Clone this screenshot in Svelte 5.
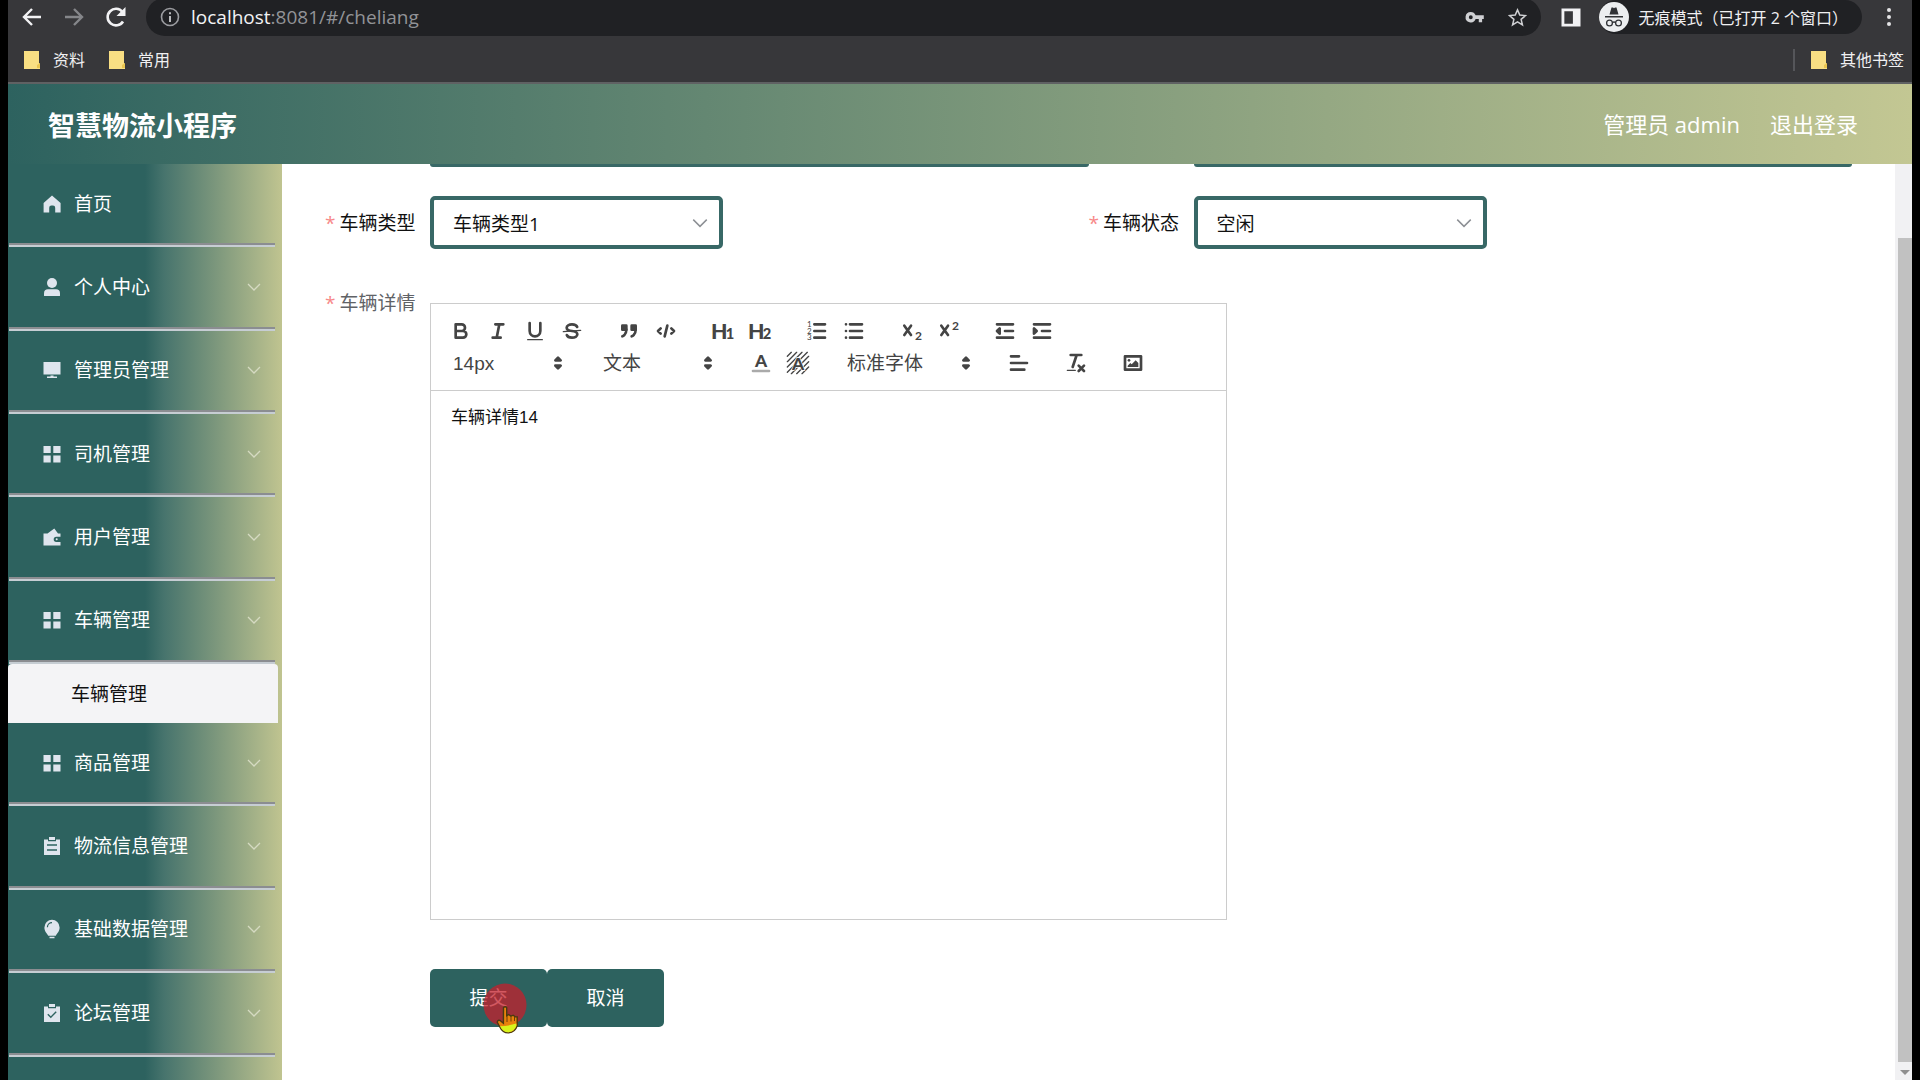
<script>
  const firstGroup = [
    { label: '首页', icon: 'home', leaf: true },
    { label: '个人中心', icon: 'user' },
    { label: '管理员管理', icon: 'screen' },
    { label: '司机管理', icon: 'grid' },
    { label: '用户管理', icon: 'wallet' },
    { label: '车辆管理', icon: 'grid' }
  ];
  const secondGroup = [
    { label: '商品管理', icon: 'grid' },
    { label: '物流信息管理', icon: 'order' },
    { label: '基础数据管理', icon: 'bulb' },
    { label: '论坛管理', icon: 'claim' },
    { label: '', icon: '' }
  ];
  const topGroups = [
    ['bold', 'italic', 'underline', 'strike'],
    ['quote', 'code'],
    ['h1', 'h2'],
    ['ordered', 'bullet'],
    ['sub', 'super'],
    ['outdent', 'indent']
  ];
  let type = $state('车辆类型1');
  let status = $state('空闲');
  let detail = $state('车辆详情14');
</script>

{#snippet folder()}
  <svg class="folder" viewBox="0 0 18 20" aria-hidden="true">
    <path d="M1 1h15v12l1 1v5H1z" fill="#f9df83" />
    <path d="M14 18v-3l3-2v5z" fill="#eac54f" />
  </svg>
{/snippet}

{#snippet chevron()}
  <svg class="chevron" viewBox="0 0 16 16" aria-hidden="true">
    <path d="M2 5l6 6 6-6" fill="none" stroke="currentColor" stroke-width="1.3" />
  </svg>
{/snippet}

{#snippet menuIcon(name)}
  <svg class="menu-icon" viewBox="0 0 20 20" aria-hidden="true" fill="currentColor">
    {#if name === 'home'}
      <path d="M10 1.6 18.6 9v9.4h-5.4v-4.6a2.2 2.2 0 0 0-2.2-2.2h-1.6a2.2 2.2 0 0 0-2.2 2.2v4.6H1.6V9z" />
    {:else if name === 'user'}
      <circle cx="10" cy="6" r="5" />
      <path d="M2 18.5v-2.2c0-2.500 1.500-4 4-4h8c2.500 0 4 1.500 4 4v2.200q0 .5-.5.5h-15q-.5 0-.5-.5z" />
    {:else if name === 'screen'}
      <path d="M1.500 2h17v12.500h-17zM8.500 15.500h3v1h3.500v1.500H5v-1.500h3.500z" />
    {:else if name === 'grid'}
      <path d="M1.500 2h7.200v7H1.500zM11.300 2h7.200v7h-7.200zM1.500 11.400h7.200v7H1.500zM11.300 11.400h7.200v7h-7.200z" />
    {:else if name === 'wallet'}
      <path d="M1.500 6.500h4L12.300 1.500l3.700 5h2.500v3.200h-4.200a2.600 2.600 0 0 0 0 5.200h4.200v3.500h-17z" />
      <circle cx="14.700" cy="12.300" r="1" />
    {:else if name === 'order'}
      <path fill-rule="evenodd" d="M2 3.500h4v1.800h8V3.500h4V19H2zM5 8.200v1.500h10V8.200zM5 13.200v1.500h10v-1.500zM7 1h6v3H7z" />
    {:else if name === 'bulb'}
      <path fill-rule="evenodd" d="M10 .8a7.600 7.600 0 0 1 7.600 7.600c0 4-2.500 5.600-3.800 8.300H6.200C4.900 14 2.400 12.400 2.400 8.400A7.600 7.600 0 0 1 10 .8zM4.800 8.200h1.200A4 4 0 0 1 10 4.300V3.100a5.200 5.200 0 0 0-5.200 5.100zM7.500 17.800h5v1.400h-5z" />
    {:else if name === 'claim'}
      <path d="M2 3.500h4v1.800h8V3.500h4V19H2zM7 1h6v3H7z" />
      <path d="M5.800 11.200l3 3 5.400-5.400" fill="none" stroke="#2f6361" stroke-width="1.400" />
    {/if}
  </svg>
{/snippet}

{#snippet menuItem(item)}
  <li>
    <a class="menu-link" href="#/{item.icon}" aria-label={item.label || '更多'}>
      {@render menuIcon(item.icon)}
      <span>{item.label}</span>
      {#if !item.leaf}{@render chevron()}{/if}
    </a>
  </li>
{/snippet}

{#snippet tool(name)}
  <button class="tool" type="button" aria-label={name}>
    <svg viewBox="0 0 18 18" aria-hidden="true">
      {#if name === 'bold'}
        <path class="s" d="M5 4h4.500a2.500 2.500 0 0 1 0 5H5zM5 9h5.500a2.500 2.500 0 0 1 0 5H5z" />
      {:else if name === 'italic'}
        <path class="s" d="M7 4h6M5 14h6M8 14l2-10" />
      {:else if name === 'underline'}
        <path class="s" d="M5 3v6a4 4 0 0 0 8 0V3" />
        <rect class="f" x="3" y="15" width="12" height="1" rx="0.500" />
      {:else if name === 'strike'}
        <path class="t" d="M2.500 9.500l13-1" />
        <path class="s" d="M12.900 6C12.500 4.800 10.900 4 9 4 6.800 4 5 5.100 5 6.500 5 8 6.200 8.700 9 9s4 1 4 2.500S11.200 14 9 14c-1.900 0-3.500-.8-3.900-2" />
      {:else if name === 'quote'}
        <path class="s f" d="M4 5h3v3H4zM11 5h3v3h-3z" />
        <path class="s f" d="M7 8c0 4-3 5-3 5M14 8c0 4-3 5-3 5" />
      {:else if name === 'code'}
        <path class="s" d="M5 7L3 9l2 2M13 7l2 2-2 2M10 5L8 13" />
      {:else if name === 'h1' || name === 'h2'}
        <text class="glyph heavy" x="0" y="15" font-size="16">H</text>
        <text class="glyph heavy" x="11" y="15" font-size="11">{name[1]}</text>
      {:else if name === 'ordered'}
        <path class="s" d="M7 4h8M7 9h8M7 14h8" />
        <text class="tiny" x="1.500" y="6">1</text>
        <text class="tiny" x="1.500" y="11">2</text>
        <text class="tiny" x="1.500" y="16">3</text>
      {:else if name === 'bullet'}
        <path class="s" d="M6 4h9M6 9h9M6 14h9M3 4h0M3 9h0M3 14h0" />
      {:else if name === 'sub'}
        <path class="s" d="M4 5l5 7M9 5l-5 7" />
        <text class="small" x="12" y="16">2</text>
      {:else if name === 'super'}
        <path class="s" d="M4 5l5 7M9 5l-5 7" />
        <text class="small" x="12" y="8">2</text>
      {:else if name === 'outdent'}
        <path class="s" d="M3 4h12M3 14h12M9 9h6" />
        <path class="s f" d="M5 7v4L3 9z" />
      {:else if name === 'indent'}
        <path class="s" d="M3 4h12M3 14h12M9 9h6" />
        <path class="s f" d="M3 7v4l2-2z" />
      {:else if name === 'color'}
        <text class="glyph heavy" x="9" y="12" font-size="13" text-anchor="middle">A</text>
        <path class="s pale" d="M3 15h12" />
      {:else if name === 'background'}
        <path class="t" d="M1 4l3-3M1 8l7-7M1 12l11-11M1 16l15-15M4 17l13-13M8 17l9-9M12 17l5-5" />
        <text class="glyph heavy halo" x="9" y="14" font-size="13" text-anchor="middle">A</text>
      {:else if name === 'align'}
        <path class="s" d="M3 4h6M3 9h12M3 14h10" />
      {:else if name === 'clean'}
        <path class="s" d="M5 3h8M6.500 12l3-9M11 11l4 4M15 11l-4 4" />
        <rect class="f" x="2" y="14" width="7" height="1" rx="0.500" />
      {:else if name === 'image'}
        <rect class="s" x="3" y="4" width="12" height="10" />
        <circle class="f" cx="6" cy="7" r="1" />
        <path class="f" d="M5 12v-1l2-2 1 1 3-3 2 2v3z" />
      {/if}
    </svg>
  </button>
{/snippet}

{#snippet picker(label, value, wide)}
  <span class="picker" class:wide>
    <select aria-label={label}>
      <option>{value}</option>
    </select>
    <svg viewBox="0 0 18 18" aria-hidden="true">
      <path class="s f" d="M7 11l2 2 2-2zM7 7l2-2 2 2z" />
    </svg>
  </span>
{/snippet}

<div class="window">
  <div class="browser">
    <div class="toolbar">
      <button class="nav" type="button" aria-label="后退">
        <svg viewBox="0 0 24 24" aria-hidden="true"><path d="M21 12H4M12 4l-8 8 8 8" fill="none" stroke="#f2f2f4" stroke-width="2.400" /></svg>
      </button>
      <button class="nav" type="button" aria-label="前进">
        <svg viewBox="0 0 24 24" aria-hidden="true"><path d="M3 12h17M12 4l8 8-8 8" fill="none" stroke="#85868a" stroke-width="2.400" /></svg>
      </button>
      <button class="nav" type="button" aria-label="刷新">
        <svg viewBox="0 0 24 24" aria-hidden="true">
          <path d="M19 16.500A8.300 8.300 0 1 1 18.500 7" fill="none" stroke="#f2f2f4" stroke-width="2.600" />
          <path d="M21.500 2v9h-9z" fill="#f2f2f4" />
        </svg>
      </button>
      <div class="address">
        <svg class="info" viewBox="0 0 20 20" aria-hidden="true">
          <circle cx="10" cy="10" r="8.500" fill="none" stroke="#9b9ca0" stroke-width="1.600" />
          <path d="M10 9v6M10 5.200v2" stroke="#b9babd" stroke-width="2" />
        </svg>
        <span class="url"><b>localhost</b>:8081/#/cheliang</span>
        <svg class="key" viewBox="0 0 20 14" aria-hidden="true">
          <path fill-rule="evenodd" fill="#cfd0d3" d="M6 1a5.600 5.600 0 0 1 5.200 3.600H20v4h-1.800V12h-3.600V8.600h-3.400A5.600 5.600 0 1 1 6 1zm0 3.600a2.100 2.100 0 1 0 0 4.200 2.100 2.100 0 0 0 0-4.200z" />
        </svg>
        <svg class="star" viewBox="0 0 20 20" aria-hidden="true">
          <path fill="none" stroke="#cfd0d3" stroke-width="1.600" d="M10 2l2.400 5.500 6 .5-4.600 3.900 1.400 5.900L10 14.700l-5.200 3.100 1.400-5.900L1.600 8l6-.5z" />
        </svg>
      </div>
      <svg class="panel" viewBox="0 0 20 20" aria-hidden="true">
        <path fill="#f2f2f4" fill-rule="evenodd" d="M0 0.500h20v19H0zM3 3.500v13h9v-13z" />
      </svg>
      <div class="incognito">
        <svg viewBox="0 0 30 30" aria-hidden="true">
          <circle cx="15" cy="15" r="15" fill="#eceef0" />
          <path d="M10.500 12.500l2-7h1.500l1 .8 1-.8h1.500l2 7zM6 14h18v1.600H6z" fill="#303236" />
          <circle cx="10.500" cy="21" r="2.900" fill="none" stroke="#303236" stroke-width="1.300" />
          <circle cx="19.500" cy="21" r="2.900" fill="none" stroke="#303236" stroke-width="1.300" />
          <path d="M13.400 20.500q1.600-1 3.200 0" fill="none" stroke="#303236" stroke-width="1.300" />
        </svg>
        <span>无痕模式（已打开 2 个窗口）</span>
      </div>
      <button class="more" type="button" aria-label="菜单">
        <svg viewBox="0 0 6 20" aria-hidden="true" fill="#e4e4e6"><circle cx="3" cy="3" r="2" /><circle cx="3" cy="10" r="2" /><circle cx="3" cy="17" r="2" /></svg>
      </button>
    </div>
    <nav class="bookmarks" aria-label="书签">
      <a href="#/ziliao">{@render folder()}资料</a>
      <a href="#/changyong">{@render folder()}常用</a>
      <a class="other" href="#/other">{@render folder()}其他书签</a>
    </nav>
  </div>

  <header class="app-header">
    <h1>智慧物流小程序</h1>
    <span>管理员 admin</span>
    <a href="#/logout">退出登录</a>
  </header>

  <div class="body">
    <aside>
      <ul class="menu first">
        {#each firstGroup as item}{@render menuItem(item)}{/each}
      </ul>
      <a class="submenu" href="#/cheliang">车辆管理</a>
      <ul class="menu second">
        {#each secondGroup as item}{@render menuItem(item)}{/each}
      </ul>
    </aside>

    <main>
      <form onsubmit={(e) => e.preventDefault()}>
        <div class="clipped" aria-hidden="true"><i></i><i></i></div>
        <div class="row">
          <div class="field">
            <label for="type"><em>*</em>车辆类型</label>
            <div class="select">
              <select id="type" bind:value={type}><option>车辆类型1</option></select>
              {@render chevron()}
            </div>
          </div>
          <div class="field">
            <label for="status"><em>*</em>车辆状态</label>
            <div class="select">
              <select id="status" bind:value={status}><option>空闲</option></select>
              {@render chevron()}
            </div>
          </div>
        </div>
        <div class="field detail">
          <label for="detail"><em>*</em>车辆详情</label>
          <div class="editor">
            <div class="tools">
              <div class="tool-row">
                {#each topGroups as group}
                  <span class="group">{#each group as name}{@render tool(name)}{/each}</span>
                {/each}
              </div>
              <div class="tool-row">
                {@render picker('字号', '14px', false)}
                {@render picker('标题', '文本', false)}
                <span class="group">{@render tool('color')}{@render tool('background')}</span>
                {@render picker('字体', '标准字体', true)}
                <span class="group">{@render tool('align')}</span>
                <span class="group">{@render tool('clean')}</span>
                <span class="group">{@render tool('image')}</span>
              </div>
            </div>
            <textarea id="detail" bind:value={detail}></textarea>
          </div>
        </div>
        <div class="actions">
          <button type="submit">
            提交
            <svg class="pointer" viewBox="0 0 48 52" aria-hidden="true">
              <circle cx="22" cy="22" r="21.500" fill="#c4202c" fill-opacity="0.750" />
              <path d="M20.500 24.500q1.800-1.500 3.200.2v8l2-1.200 2.200 1.600 2.300-.9 2 1.500 2 .2v9q-2.200 6.500-8.500 7-6 .2-9-6.200l-2.500-4.500q.8-3 3.200-1.500l3 2.500z" fill="#e8820c" stroke="#4a3a10" stroke-width="1.400" />
              <path d="M17 43.200q8.500-.2 16.400-2.600v2.200q-2 5.800-7.800 6.400-5.600.2-8.600-6z" fill="#d8f51c" />
              <path d="M24 33v6M28 33.500v5M31.500 34v4" stroke="#6b3c08" stroke-width="1" />
            </svg>
          </button>
          <button type="button">取消</button>
        </div>
      </form>
    </main>
    <div class="scrollbar" aria-hidden="true">
      <i class="thumb"></i>
      <i class="down"></i>
    </div>
  </div>
</div>

<style>
  :global(body) {
    margin: 0;
    background: #000;
  }
  * {
    box-sizing: border-box;
  }
  .window {
    display: flex;
    flex-direction: column;
    height: 100vh;
    margin: 0 8px;
    overflow: hidden;
    background: #fff;
    color: #111;
    font-family: 'Open Sans', 'Noto Sans CJK SC', sans-serif;
    font-size: 19px;
  }
  button,
  select,
  textarea {
    font: inherit;
    color: inherit;
    border: 0;
    background: none;
    padding: 0;
    margin: 0;
  }
  a {
    color: inherit;
    text-decoration: none;
  }
  svg {
    display: block;
    flex: none;
  }

  /* browser chrome */
  .browser {
    flex: none;
    height: 84px;
    background: #37373a;
    border-bottom: 2px solid #5f6163;
    color: #f0f0f2;
    font-size: 16px;
  }
  .toolbar {
    display: flex;
    align-items: center;
    height: 36px;
    padding: 0 20px 2px 12px;
  }
  .nav {
    width: 24px;
    height: 24px;
    margin-right: 18px;
  }
  .nav svg {
    width: 24px;
    height: 24px;
  }
  .address {
    display: flex;
    align-items: center;
    flex: 1;
    height: 38px;
    padding: 0 14px;
    margin-right: 20px;
    border-radius: 19px;
    background: #202124;
  }
  .info {
    width: 20px;
    height: 20px;
  }
  .url {
    flex: 1;
    margin-left: 11px;
    color: #929397;
    font-size: 19px;
    line-height: 34px;
  }
  .url b {
    font-weight: 400;
    color: #f2f2f4;
  }
  .key {
    width: 19px;
    height: 13px;
    margin-right: 24px;
  }
  .star {
    width: 19px;
    height: 19px;
  }
  .panel {
    width: 20px;
    height: 19px;
    margin-right: 18px;
  }
  .incognito {
    display: flex;
    align-items: center;
    gap: 10px;
    height: 34px;
    padding-right: 14px;
    margin-right: 24px;
    border-radius: 17px;
    background: #202124;
    white-space: nowrap;
  }
  .incognito svg {
    width: 30px;
    height: 30px;
  }
  .more svg {
    width: 6px;
    height: 20px;
  }
  .bookmarks {
    display: flex;
    align-items: center;
    gap: 23px;
    height: 48px;
    padding: 0 8px 0 15px;
  }
  .bookmarks a {
    display: flex;
    align-items: center;
    gap: 12px;
    line-height: 22px;
  }
  .bookmarks .other {
    margin-left: auto;
    padding-left: 15px;
    border-left: 2px solid #55565a;
  }
  .folder {
    width: 18px;
    height: 20px;
  }

  /* application header */
  .app-header {
    display: flex;
    align-items: center;
    flex: none;
    height: 80px;
    padding: 0 54px 0 40px;
    background: linear-gradient(90deg, #2d625f, #c3c793);
    color: #fff;
    font-size: 22px;
  }
  h1 {
    flex: 1;
    margin: 0;
    font-size: 27px;
    font-weight: 700;
  }
  .app-header a {
    margin-left: 30px;
  }
  .app-header span,
  .app-header a {
    padding-bottom: 2px;
  }

  .body {
    display: flex;
    flex: 1;
    min-height: 0;
  }

  /* sidebar */
  aside {
    flex: none;
    width: 274px;
    overflow: hidden;
    background: linear-gradient(90deg, #2d625f 50%, #47746d 57%, #c0c490);
    color: #fff;
  }
  .menu {
    display: grid;
    grid-auto-rows: 1fr;
    margin: 0;
    padding: 0;
    list-style: none;
  }
  .first {
    height: 500px;
  }
  .second {
    height: 417px;
  }
  .menu li {
    display: flex;
    margin: 0 7px 0 1px;
    border-bottom: 2px solid #c6cdd3;
  }
  .menu-link {
    display: flex;
    align-items: center;
    flex: 1;
    padding: 0 13px 0 33px;
    border-bottom: 2px solid #8b8d91;
  }
  .menu-icon {
    width: 20px;
    height: 20px;
    margin-right: 12px;
    color: #dfe5ee;
  }
  .menu-link span {
    flex: 1;
    padding-bottom: 2px;
  }
  .chevron {
    width: 16px;
    height: 16px;
  }
  .menu .chevron {
    color: #d5dac2;
  }
  .submenu {
    display: block;
    margin-right: 4px;
    padding: 2px 0 0 63px;
    border-radius: 4px 4px 0 0;
    background: #f4f4f6;
    color: #111;
    line-height: 57px;
  }

  /* form */
  main {
    flex: 1;
    min-width: 0;
    padding: 0 43px;
    overflow: hidden;
  }
  .clipped,
  .row {
    display: grid;
    grid-template-columns: 1fr 1fr;
  }
  .clipped i {
    height: 3px;
    margin-left: 105px;
    border-radius: 0 0 5px 5px;
    background: #386866;
  }
  .row {
    padding-top: 29px;
  }
  .field {
    display: flex;
  }
  .field label {
    flex: none;
    width: 105px;
    padding-right: 18px;
    line-height: 54px;
    text-align: right;
    white-space: nowrap;
  }
  .field em {
    margin-right: 4px;
    color: #f78989;
    font-style: normal;
  }
  .row .field {
    height: 53px;
  }
  .select,
  .picker {
    display: grid;
    align-items: center;
  }
  .select > :global(*),
  .picker > * {
    grid-area: 1 / 1;
  }
  .select {
    width: 293px;
    height: 53px;
  }
  .select select {
    width: 100%;
    height: 100%;
    padding: 2px 40px 0 19px;
    border: 4px solid #386866;
    border-radius: 5px;
    background: #fff;
    appearance: none;
  }
  .select .chevron {
    justify-self: end;
    width: 18px;
    height: 18px;
    margin-right: 14px;
    color: #8d9095;
    pointer-events: none;
  }
  .detail {
    margin-top: 54px;
  }
  .detail label {
    height: 0;
    line-height: 0;
    color: #606266;
  }
  .editor {
    display: flex;
    flex-direction: column;
    width: 797px;
    height: 617px;
    border: 1px solid #ccc;
  }
  .tools {
    padding: 11px;
    border-bottom: 1px solid #ccc;
    color: #444;
  }
  .tool-row {
    display: flex;
    gap: 20px;
    height: 32px;
  }
  .group {
    display: flex;
  }
  .tool {
    display: grid;
    place-items: center;
    width: 37px;
    height: 32px;
  }
  .tool svg,
  .picker svg {
    width: 24px;
    height: 24px;
  }
  .picker {
    width: 130px;
    height: 32px;
  }
  .picker.wide {
    width: 144px;
  }
  .picker select {
    width: 100%;
    padding-left: 11px;
    appearance: none;
    font-family: 'Liberation Sans', 'Noto Sans CJK SC', sans-serif;
  }
  .picker svg {
    justify-self: end;
    margin-right: 2px;
    pointer-events: none;
  }
  .s {
    fill: none;
    stroke: #444;
    stroke-width: 2;
    stroke-linecap: round;
    stroke-linejoin: round;
  }
  .t {
    fill: none;
    stroke: #444;
    stroke-width: 1;
    stroke-linecap: round;
  }
  .f {
    fill: #444;
  }
  .pale {
    stroke: #aaa;
  }
  .glyph {
    fill: #444;
    font-family: Lato, sans-serif;
    font-weight: 700;
  }
  .heavy {
    font-weight: 900;
  }
  .halo {
    stroke: #fff;
    stroke-width: 1;
    paint-order: stroke;
  }
  .small {
    fill: #444;
    font-family: Lato, sans-serif;
    font-size: 9px;
    font-weight: 700;
  }
  .tiny {
    fill: #444;
    font-family: Lato, sans-serif;
    font-size: 6px;
  }
  textarea {
    flex: 1;
    padding: 16px 20px;
    line-height: 22px;
    font-family: 'Liberation Sans', 'Noto Sans CJK SC', sans-serif;
    font-size: 17px;
    resize: none;
    outline: 0;
  }
  .actions {
    display: flex;
    gap: 1px;
    margin: 49px 0 0 105px;
  }
  .actions button {
    position: relative;
    width: 117px;
    height: 58px;
    padding-bottom: 2px;
    border-radius: 5px;
    background: #2d625f;
    color: #fff;
  }
  .actions button + button {
    margin-left: -1px;
  }
  .pointer {
    position: absolute;
    top: 14px;
    left: 53px;
    z-index: 1;
    width: 48px;
    height: 52px;
  }

  /* page scrollbar */
  .scrollbar {
    display: flex;
    flex-direction: column;
    align-items: flex-end;
    flex: none;
    width: 17px;
    padding-top: 74px;
    background: #f1f1f3;
  }
  .thumb {
    flex: 1;
    width: 14px;
    background: #c1c1c1;
  }
  .down {
    width: 0;
    margin: 8px 2px 5px 0;
    border: 5px solid transparent;
    border-top: 5px solid #8f8f8f;
    border-bottom: 0;
  }
</style>
